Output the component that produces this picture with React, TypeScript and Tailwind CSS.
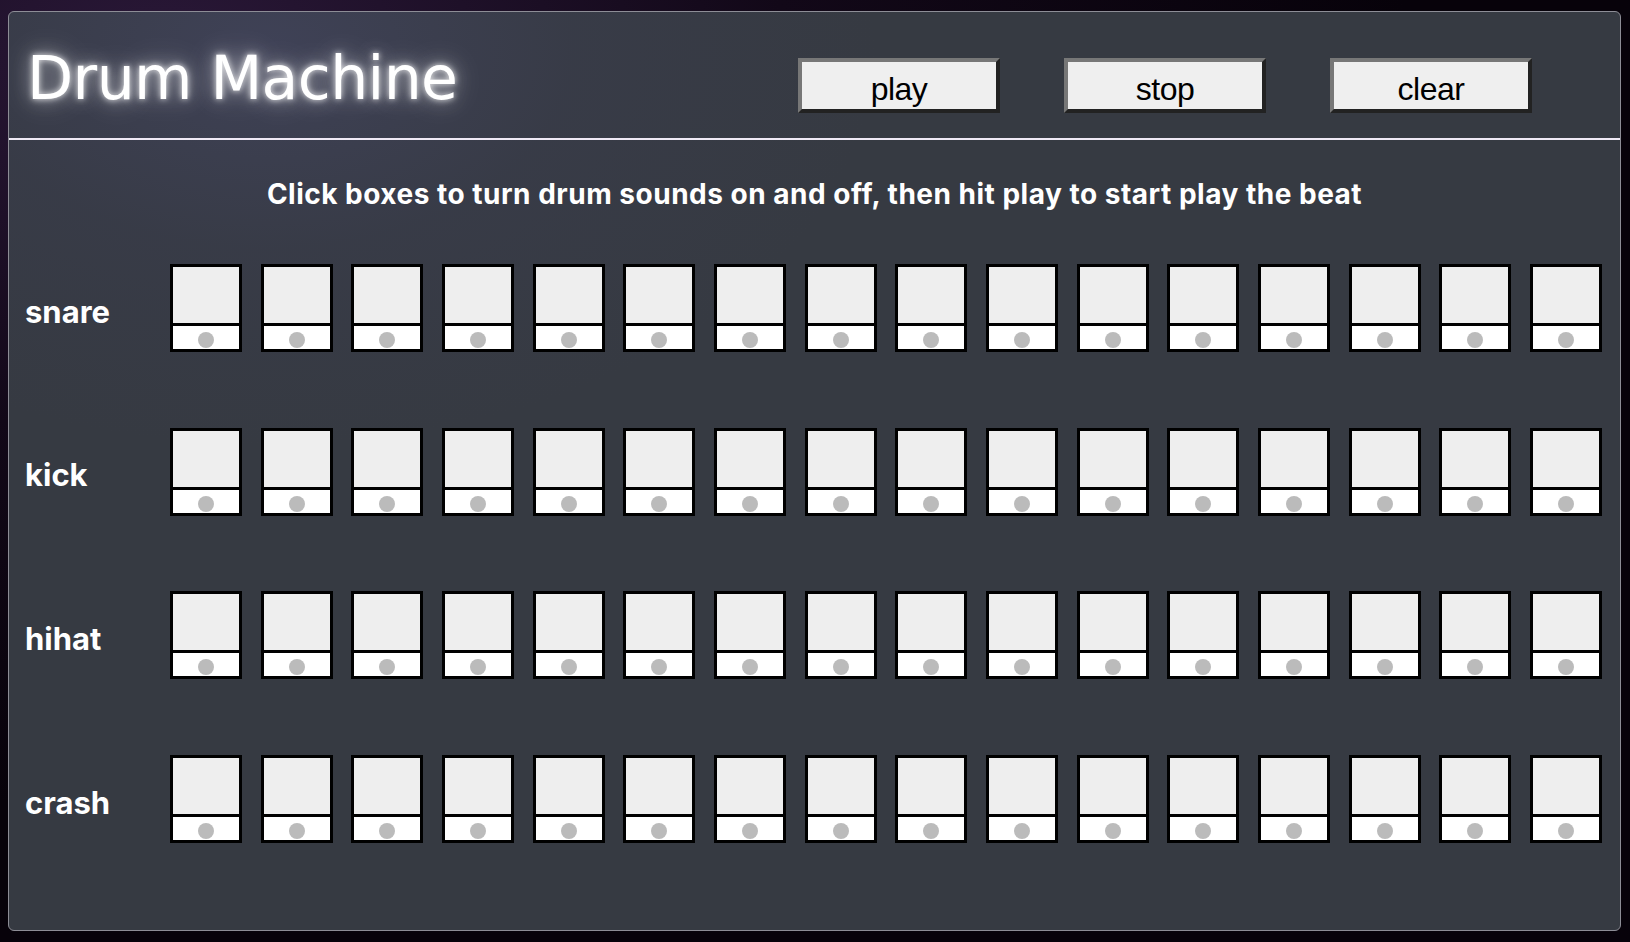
import React from 'react';

const sounds = ['snare', 'kick', 'hihat', 'crash'];
const steps = Array.from({ length: 16 }, (_, i) => i);

const Cell = () => (
  <div className="flex h-[88px] w-[72px] flex-col border-[3px] border-black">
    <div className="h-[56px] bg-[#eeeeee]" />
    <div className="flex flex-1 items-end justify-center border-t-[3px] border-black bg-white pb-[1px]">
      <div className="h-4 w-4 rounded-full bg-[#bbbbbb]" />
    </div>
  </div>
);

const Btn = ({ label }: { label: string }) => (
  <button className="h-[55px] w-[202px] border-[4px] border-t-[#777777] border-l-[#777777] border-b-[#222222] border-r-[#222222] bg-[#efefef] pt-[6px] font-['Liberation_Sans',Arial,sans-serif] text-[32px] leading-none tracking-[-0.5px] text-black">
    {label}
  </button>
);

export default function App() {
  return (
    <div className="min-h-[942px] w-full overflow-hidden bg-[#07020a] bg-[radial-gradient(ellipse_at_10%_6%,#2a1838_0%,#120818_30%,#07020a_60%)] pt-[11px] pl-[8px]">
      <div className="h-[920px] w-[1613px] overflow-hidden rounded-[6px] border border-[#8d8d96] bg-[#363a42] bg-[radial-gradient(ellipse_at_16%_4%,rgba(80,80,125,0.35)_0%,rgba(66,66,100,0.15)_16%,rgba(54,58,66,0)_32%)]">
        {/* Header */}
        <div className="flex h-[128px] border-b-2 border-[#efe9f5]">
          <div className="w-[789px] pl-[18px] pt-[31px]">
            <h1 className="font-['DejaVu_Sans',sans-serif] text-[60px] font-normal leading-[70px] tracking-[-0.6px] text-white [text-shadow:0_0_6px_rgba(255,255,255,0.9),0_0_18px_rgba(255,255,255,0.6),0_0_34px_rgba(255,255,255,0.3)]">
              Drum Machine
            </h1>
          </div>
          <div className="flex gap-[64px] pt-[46px]">
            <Btn label="play" />
            <Btn label="stop" />
            <Btn label="clear" />
          </div>
        </div>

        {/* Instructions */}
        <p className="pt-[38px] text-center font-['Inter',sans-serif] text-[28px] font-bold leading-[32px] tracking-[0.5px] text-white">
          Click boxes to turn drum sounds on and off, then hit play to start play the beat
        </p>

        {/* Sequencer */}
        <div className="mt-[54px] flex flex-col gap-[75.7px] pr-[18px]">
          {sounds.map((s) => (
            <div key={s} className="flex h-[88px] items-center">
              <div className="w-[161px] pl-[16px] pt-[8px] font-['Inter',sans-serif] text-[31px] font-bold text-white">
                {s}
              </div>
              <div className="flex flex-1 justify-between">
                {steps.map((i) => (
                  <Cell key={i} />
                ))}
              </div>
            </div>
          ))}
        </div>
      </div>
    </div>
  );
}
